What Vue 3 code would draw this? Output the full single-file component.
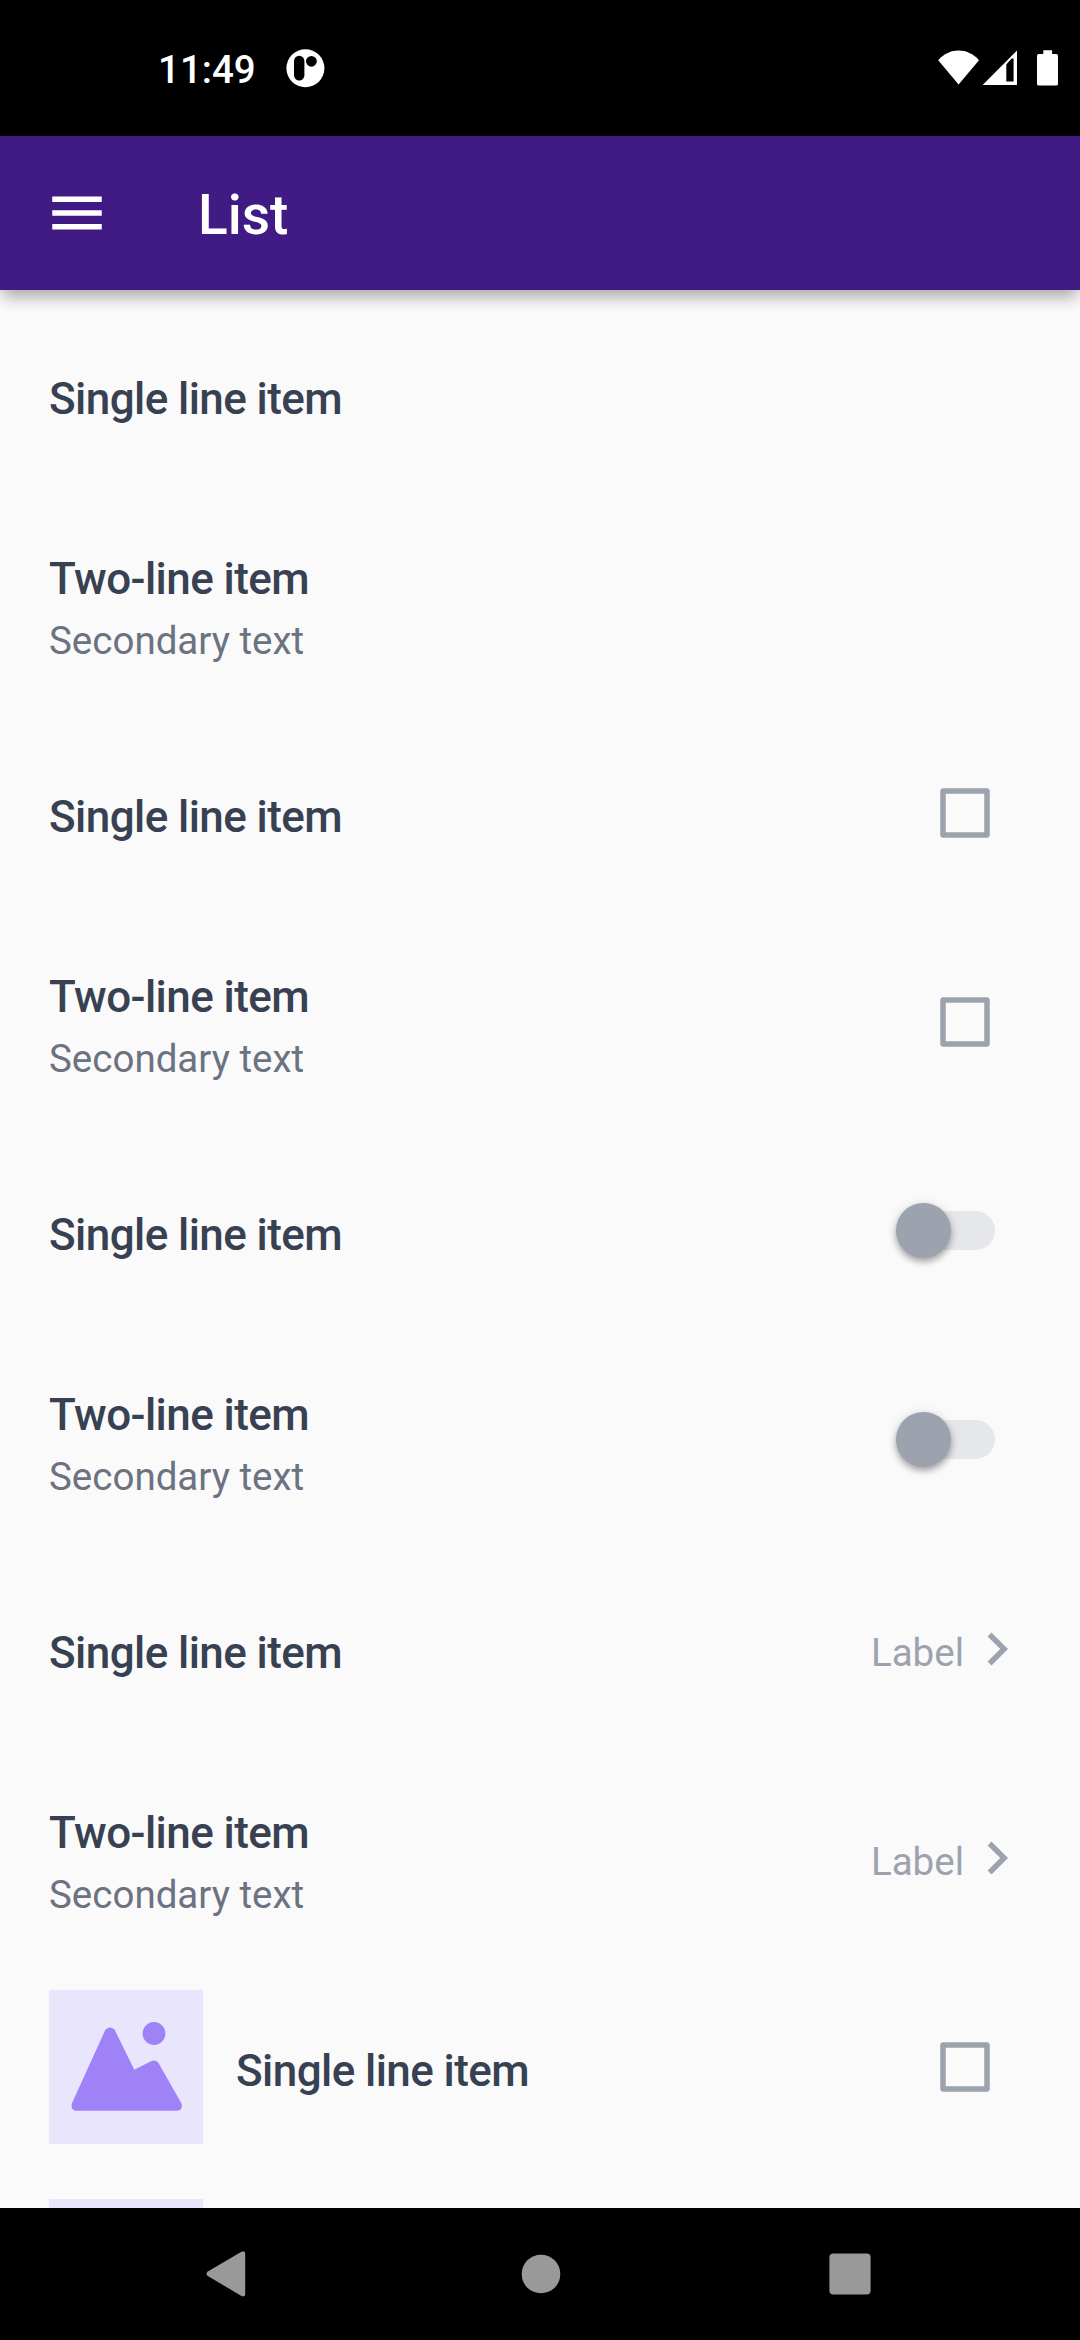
<script setup>
const rows = [
  { title: 'Single line item' },
  { title: 'Two-line item', secondary: 'Secondary text' },
  { title: 'Single line item', control: 'checkbox' },
  { title: 'Two-line item', secondary: 'Secondary text', control: 'checkbox' },
  { title: 'Single line item', control: 'switch' },
  { title: 'Two-line item', secondary: 'Secondary text', control: 'switch' },
  { title: 'Single line item', control: 'label' },
  { title: 'Two-line item', secondary: 'Secondary text', control: 'label' },
  { title: 'Single line item', control: 'checkbox', image: true },
  { image: true },
]
</script>

<template>
  <div class="screen">
    <div class="status">
      <span class="time">11:49</span>
      <svg class="logo" width="40" height="40" viewBox="0 0 40 40">
        <circle cx="20.4" cy="20.3" r="19" fill="#fff" />
        <rect x="9" y="7.8" width="10.4" height="24.6" rx="5.2" fill="#000" />
        <circle cx="26.4" cy="13.3" r="5.4" fill="#000" />
      </svg>
      <svg class="system" width="122" height="38" viewBox="0 0 122 38" fill="#fff">
        <path d="M0.2 10.2C11.5-2.6 29.7-2.6 41 10.2L20.6 34.6z" />
        <path fill-rule="evenodd" d="M44.6 35L79 0.4V35zM68.3 14.5V31.4H75.6V8.6H73.6z" />
        <path d="M105.3 0.3h8.8v3.7h4.2a1.7 1.7 0 0 1 1.7 1.7v28.2a1.7 1.7 0 0 1-1.7 1.7h-17.6a1.7 1.7 0 0 1-1.7-1.7V5.7a1.7 1.7 0 0 1 1.7-1.7h4.6z" />
      </svg>
    </div>

    <header class="appbar">
      <svg width="66" height="66" viewBox="0 0 24 24" fill="#fff">
        <path d="M3 18h18v-2H3zm0-5h18v-2H3zm0-7v2h18V6z" />
      </svg>
      <h1>List</h1>
    </header>

    <main class="list">
      <div v-for="(row, i) in rows" :key="i" class="row">
        <svg v-if="row.image" class="thumb" width="154" height="154" viewBox="0 0 154 154">
          <rect width="154" height="154" fill="#e9e5fd" />
          <g fill="#9f82f5">
            <circle cx="105" cy="43.5" r="11.4" />
            <path d="M56.5 39.5Q61 35.3 65.5 39.5L85.3 79.8L102 71.2Q106.5 69.3 109.5 73L132.5 113.5Q134 120.7 128 120.7H27.5Q21.6 120.5 22.8 113.5z" />
          </g>
        </svg>
        <div v-if="row.title" class="text" :class="{ double: row.secondary }">
          <div class="title">{{ row.title }}</div>
          <div v-if="row.secondary" class="secondary">{{ row.secondary }}</div>
        </div>
        <svg v-if="row.control === 'checkbox'" class="checkbox" width="66" height="66" viewBox="0 0 24 24" fill="#9ca3af">
          <path d="M19 5v14H5V5h14m1-2H4c-.55 0-1 .45-1 1v16c0 .55.45 1 1 1h16c.55 0 1-.45 1-1V4c0-.55-.45-1-1-1z" />
        </svg>
        <div v-else-if="row.control === 'switch'" class="switch">
          <span class="knob"></span>
        </div>
        <div v-else-if="row.control === 'label'" class="more">
          <span>Label</span>
          <svg width="66" height="66" viewBox="0 0 24 24" fill="#9ca3af">
            <path d="M10 6L8.59 7.41 13.17 12l-4.58 4.59L10 18l6-6z" />
          </svg>
        </div>
      </div>
    </main>

    <nav class="navbar">
      <svg width="46" height="46" viewBox="0 0 46 46" fill="#999">
        <path d="M38 .9Q42.2-1.2 42.2 3V43Q42.2 46.8 38 44.7L4.8 25Q2.2 22.8 4.8 20.4z" />
      </svg>
      <svg class="home" width="46" height="46" viewBox="0 0 46 46" fill="#999"><circle cx="23" cy="23" r="19.3" /></svg>
      <svg width="46" height="46" viewBox="0 0 46 46" fill="#999"><rect x="2.4" y="2.4" width="41.2" height="41.2" rx="4" /></svg>
    </nav>
  </div>
</template>

<style>
body {
  margin: 0;
  background: #fafafa;
}
</style>

<style scoped>
.screen {
  width: 1080px;
  height: 2340px;
  display: flex;
  flex-direction: column;
  overflow: hidden;
  background: #fafafa;
  font-family: Roboto, sans-serif;
}
svg {
  display: block;
  flex: none;
}
.status {
  flex: none;
  box-sizing: border-box;
  height: 136px;
  display: flex;
  align-items: flex-start;
  padding: 48px 20px 0 158px;
  background: #000;
}
.time {
  width: 127px;
  color: #fff;
  font-size: 38.5px;
  font-weight: 500;
  line-height: 44px;
}
.system {
  margin: 2px 0 0 auto;
}
.appbar {
  position: relative;
  flex: none;
  box-sizing: border-box;
  height: 154px;
  display: flex;
  align-items: center;
  gap: 88px;
  padding-left: 44px;
  background: #411b84;
  box-shadow: 0 11px 14px -3px rgba(0, 0, 0, 0.24), 0 2px 20px rgba(0, 0, 0, 0.12);
}
h1 {
  margin: 4px 0 0;
  color: #fff;
  font-size: 55px;
  font-weight: 500;
  line-height: 64px;
}
.list {
  flex: 1;
  min-height: 0;
  overflow: hidden;
}
.row {
  box-sizing: border-box;
  height: 209px;
  display: flex;
  align-items: center;
  padding: 0 50px 0 49px;
}
.thumb {
  margin-right: 33px;
}
.text {
  flex: 1;
  padding-top: 9px;
}
.text.double {
  padding-top: 13px;
}
.title {
  color: #374151;
  font-size: 44px;
  font-weight: 500;
  line-height: 62px;
  letter-spacing: -0.57px;
}
.secondary {
  color: #6b7280;
  font-size: 38.5px;
  line-height: 62px;
}
.checkbox {
  margin-right: 32.5px;
}
.switch {
  display: flex;
  align-items: center;
  width: 93.5px;
  height: 38.5px;
  margin-right: 35px;
  border-radius: 20px;
  background: #e5e7eb;
}
.knob {
  flex: none;
  width: 55px;
  height: 55px;
  margin-left: -5.5px;
  border-radius: 50%;
  background: #9ca3af;
  box-shadow: 0 4px 6px rgba(0, 0, 0, 0.28), 0 1px 11px rgba(0, 0, 0, 0.12);
}
.more {
  display: flex;
  align-items: center;
  color: #9ca3af;
  font-size: 38.5px;
  line-height: 46px;
}
.more span {
  padding-top: 8px;
}
.navbar {
  flex: none;
  height: 132px;
  display: flex;
  align-items: center;
  justify-content: space-between;
  padding: 0 207px 0 203px;
  background: #000;
}
.home {
  margin-left: 5px;
}
</style>
